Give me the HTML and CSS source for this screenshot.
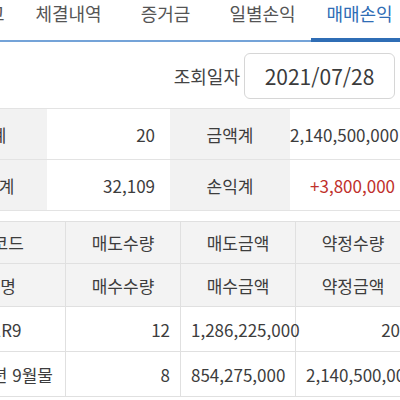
FILE: index.html
```html
<!DOCTYPE html>
<html lang="ko">
<head>
<meta charset="utf-8">
<link rel="stylesheet" href="styles.css">
</head>
<body>
<div class="screen">
  <nav class="tabs">
    <div class="tab">미결잔고</div>
    <div class="tab">체결내역</div>
    <div class="tab">증거금</div>
    <div class="tab">일별손익</div>
    <div class="tab active">매매손익</div>
  </nav>
  <div class="query">
    <span class="query-label">조회일자</span>
    <div class="date-box">2021/07/28</div>
  </div>
  <table class="summary">
    <colgroup><col class="s1"><col class="s2"><col class="s3"><col class="s4"></colgroup>
    <tr><th>수량계</th><td>20</td><th>금액계</th><td>2,140,500,000</td></tr>
    <tr><th>수수료계</th><td>32,109</td><th>손익계</th><td class="plus">+3,800,000</td></tr>
  </table>
  <table class="detail">
    <colgroup><col class="d0"><col class="d1"><col class="d2"><col class="d3"></colgroup>
    <tr class="head"><th>종목코드</th><th>매도수량</th><th>매도금액</th><th>약정수량</th></tr>
    <tr class="head"><th>종목명</th><th>매수수량</th><th>매수금액</th><th>약정금액</th></tr>
    <tr class="row"><td class="name">101R9</td><td>12</td><td>1,286,225,000</td><td>20</td></tr>
    <tr class="row"><td class="name">21년 9월물</td><td>8</td><td>854,275,000</td><td>2,140,500,000</td></tr>
  </table>
</div>
</body>
</html>
```
FILE: styles.css
```css
* { box-sizing: border-box; }
html, body { margin: 0; padding: 0; background: #fff; }
body { font-family: "Noto Sans CJK KR", "Noto Sans", sans-serif; color: #3d3d3d; }
.screen { width: 400px; height: 400px; overflow: hidden; }

.tabs {
  display: flex;
  margin-left: -77px;
  height: 42px;
  border-bottom: 2px solid #74a3d8;
}
.tab {
  flex: 0 0 97px;
  height: 40px;
  text-align: center;
  font-size: 18px;
  line-height: 26px;
  color: #555;
  white-space: nowrap;
}
.tab.active {
  color: #2f6db5;
  height: 42px;
  margin-bottom: -2px;
  border-bottom: 4px solid #2f6db5;
}

.query {
  display: flex;
  justify-content: flex-end;
  align-items: center;
  gap: 4px;
  padding: 11px 5px 9px 0;
}
.query-label { font-size: 18px; color: #444; }
.date-box {
  width: 151px;
  height: 46px;
  border: 1px solid #d6d6d6;
  border-radius: 6px;
  display: flex;
  align-items: center;
  justify-content: center;
  font-size: 21px;
  color: #3b3b3b;
}

table { border-collapse: collapse; table-layout: fixed; margin-left: -81px; width: 491px; }
.summary { border-top: 1px solid #e3e3e3; }
.summary col.s1 { width: 128px; }
.summary col.s2 { width: 123px; }
.summary col.s3 { width: 120px; }
.summary col.s4 { width: 120px; }
.summary th, .summary td {
  height: 51px;
  font-size: 17px;
  font-weight: normal;
  border-bottom: 1px solid #e3e3e3;
  white-space: nowrap;
  padding: 0;
}
.summary th { background: #f2f2f2; text-align: center; color: #3d3d3d; }
.summary td { text-align: right; padding-right: 15px; }
.summary td.plus { color: #c0302b; }

.detail { margin-top: 10px; }
.detail col.d0 { width: 146px; }
.detail col.d1 { width: 115px; }
.detail col.d2 { width: 115px; }
.detail col.d3 { width: 115px; }
.detail th, .detail td {
  border: 1px solid #e0e0e0;
  font-size: 17px;
  font-weight: normal;
  white-space: nowrap;
  padding: 0 10px;
  overflow: visible;
}
.detail tr.head th { background: #f3f3f3; text-align: center; height: 42px; }
.detail tr.head + tr.head th { height: 43px; }
.detail tr.row td { text-align: right; height: 45px; background: #fff; }
.detail tr.row td.name { text-align: left; padding-left: 53px; }
```
